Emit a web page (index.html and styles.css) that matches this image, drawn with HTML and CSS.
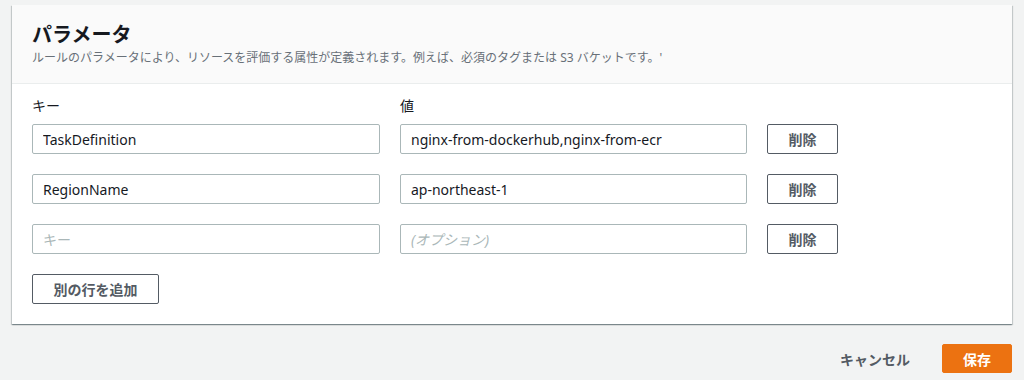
FILE: index.html
```html
<!DOCTYPE html>
<html lang="ja">
<head>
  <meta charset="UTF-8">
  <title>パラメータ</title>
  <link rel="stylesheet" href="styles.css">
</head>
<body>

  <!-- Parameters panel -->
  <section class="panel">
    <div class="panel-header">
      <h2>パラメータ</h2>
      <p>ルールのパラメータにより、リソースを評価する属性が定義されます。例えば、必須のタグまたは S3 バケットです。'</p>
    </div>
    <div class="panel-body">
      <div class="param-grid">
        <label class="col-label">キー</label>
        <label class="col-label">値</label>
        <span></span>

        <input type="text" value="TaskDefinition">
        <input type="text" value="nginx-from-dockerhub,nginx-from-ecr">
        <button class="btn">削除</button>

        <input type="text" value="RegionName">
        <input type="text" value="ap-northeast-1">
        <button class="btn">削除</button>

        <input type="text" placeholder="キー">
        <input type="text" class="optional" placeholder="(オプション)">
        <button class="btn">削除</button>
      </div>
      <button class="btn btn-add">別の行を追加</button>
    </div>
  </section>

  <!-- Actions -->
  <div class="actions">
    <button class="link-btn">キャンセル</button>
    <button class="btn-primary">保存</button>
  </div>

</body>
</html>
```

FILE: styles.css
```css
* {
  margin: 0;
  padding: 0;
  box-sizing: border-box;
}

body {
  font-family: 'Noto Sans', 'Noto Sans CJK JP', sans-serif;
  background-color: #f2f3f3;
  color: #16191f;
  padding: 5px 12px 0;
}

/* Panel */
.panel {
  background-color: #fff;
  box-shadow: 0 1px 1px 0 rgba(0, 28, 36, 0.3), 1px 1px 1px 0 rgba(0, 28, 36, 0.15), -1px 1px 1px 0 rgba(0, 28, 36, 0.15);
}

.panel-header {
  background-color: #fafafa;
  border-bottom: 1px solid #eaeded;
  height: 79px;
  padding: 17px 20px 0;
}

.panel-header h2 {
  font-size: 20px;
  font-weight: bold;
  line-height: 26px;
}

.panel-header p {
  font-size: 12px;
  color: #687078;
  line-height: 18px;
  margin-top: 1px;
}

.panel-body {
  padding: 12px 20px 20px;
}

.param-grid {
  display: grid;
  grid-template-columns: 348px 347px 71px;
  column-gap: 20px;
  row-gap: 20px;
  align-items: end;
}

.col-label {
  font-size: 14px;
  line-height: 20px;
  margin-bottom: -12px;
}

.param-grid input {
  height: 30px;
  border: 1px solid #aab7b8;
  border-radius: 2px;
  padding: 0 10px;
  font-family: inherit;
  font-size: 14px;
  color: #16191f;
  outline: none;
}

.param-grid input::placeholder {
  color: #aab7b8;
}

.param-grid input.optional::placeholder {
  font-style: italic;
}

.btn {
  height: 30px;
  background-color: #fff;
  border: 1px solid #545b64;
  border-radius: 2px;
  color: #545b64;
  font-family: inherit;
  font-size: 14px;
  font-weight: bold;
  cursor: pointer;
}

.btn-add {
  width: 127px;
  margin-top: 20px;
  display: block;
}

/* Actions */
.actions {
  display: flex;
  justify-content: flex-end;
  align-items: center;
  gap: 32px;
  margin-top: 20px;
}

.link-btn {
  background: none;
  border: none;
  color: #545b64;
  font-family: inherit;
  font-size: 14px;
  font-weight: bold;
  cursor: pointer;
}

.btn-primary {
  width: 70px;
  height: 29px;
  background-color: #ec7211;
  border: 1px solid #ec7211;
  border-radius: 2px;
  color: #fff;
  font-family: inherit;
  font-size: 14px;
  font-weight: bold;
  cursor: pointer;
}
```
